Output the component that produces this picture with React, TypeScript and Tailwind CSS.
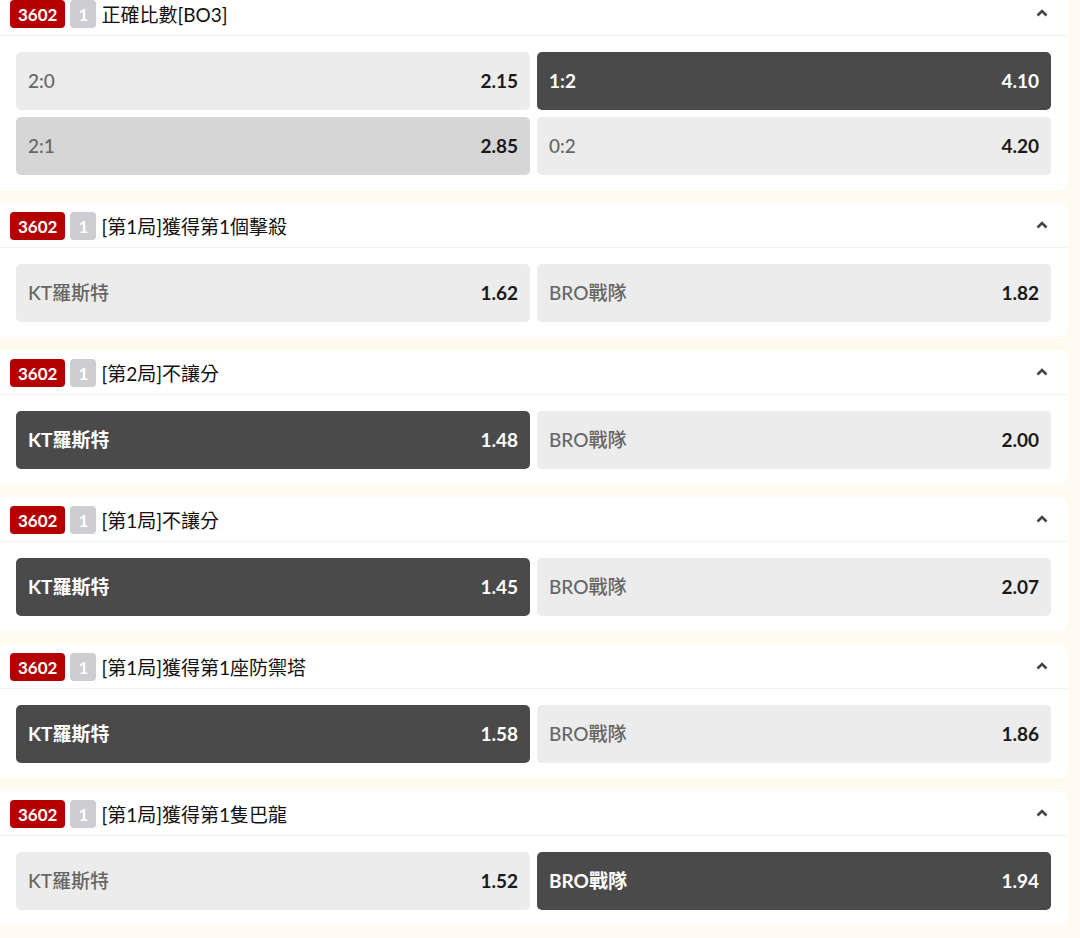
import React from "react";

type Opt = { label: string; odds: string; state?: "dark" | "hover" | "light" };
type Market = { title: string; rows: Opt[][] };

const markets: Market[] = [
  {
    title: "正確比數[BO3]",
    rows: [
      [
        { label: "2:0", odds: "2.15" },
        { label: "1:2", odds: "4.10", state: "dark" },
      ],
      [
        { label: "2:1", odds: "2.85", state: "hover" },
        { label: "0:2", odds: "4.20" },
      ],
    ],
  },
  {
    title: "[第1局]獲得第1個擊殺",
    rows: [[{ label: "KT羅斯特", odds: "1.62" }, { label: "BRO戰隊", odds: "1.82" }]],
  },
  {
    title: "[第2局]不讓分",
    rows: [[{ label: "KT羅斯特", odds: "1.48", state: "dark" }, { label: "BRO戰隊", odds: "2.00" }]],
  },
  {
    title: "[第1局]不讓分",
    rows: [[{ label: "KT羅斯特", odds: "1.45", state: "dark" }, { label: "BRO戰隊", odds: "2.07" }]],
  },
  {
    title: "[第1局]獲得第1座防禦塔",
    rows: [[{ label: "KT羅斯特", odds: "1.58", state: "dark" }, { label: "BRO戰隊", odds: "1.86" }]],
  },
  {
    title: "[第1局]獲得第1隻巴龍",
    rows: [[{ label: "KT羅斯特", odds: "1.52" }, { label: "BRO戰隊", odds: "1.94", state: "dark" }]],
  },
];

function Chevron() {
  return (
    <svg width="12" height="8" viewBox="0 0 12 8" className="block">
      <path d="M1.5 6.5 L6 2 L10.5 6.5" fill="none" stroke="#444" strokeWidth="2.6" strokeLinecap="butt" strokeLinejoin="miter" />
    </svg>
  );
}

function Button({ o }: { o: Opt }) {
  const dark = o.state === "dark";
  const bg = dark ? "bg-[#4a4a4a]" : o.state === "hover" ? "bg-[#d6d6d6]" : "bg-[#ececec]";
  return (
    <div className={`flex-1 h-[58px] rounded-[5px] ${bg} flex items-center justify-between pl-3 pr-3 text-[19px]`}>
      <span className={dark ? "text-white font-bold" : "text-[#666666] font-medium"}>{o.label}</span>
      <span className={`font-bold ${dark ? "text-white" : "text-[#1a1a1a]"}`}>{o.odds}</span>
    </div>
  );
}

function Card({ m, first }: { m: Market; first?: boolean }) {
  return (
    <div className={`bg-white w-[1067px] rounded-r-[6px] ${first ? "-mt-[9px]" : ""}`}>
      <div className="h-[45px] flex items-center pl-[10px] pr-[19px] pt-[2px] border-b border-[#f2f2f2]">
        <span className="h-[28px] px-[8px] rounded-[4px] bg-[#b50000] text-white font-bold text-[17px] flex items-center leading-none">
          3602
        </span>
        <span className="ml-[5px] h-[28px] w-[26px] rounded-[4px] bg-[#cdcdd2] text-white font-bold text-[17px] flex items-center justify-center leading-none">
          1
        </span>
        <span className="ml-[5px] text-[19px] text-[#111] leading-none">{m.title}</span>
        <span className="ml-auto -mt-[2px]">
          <Chevron />
        </span>
      </div>
      <div className="px-4 pt-4 pb-[15px] flex flex-col gap-[7px]">
        {m.rows.map((r, i) => (
          <div key={i} className="flex gap-[7px]">
            {r.map((o, j) => (
              <Button key={j} o={o} />
            ))}
          </div>
        ))}
      </div>
    </div>
  );
}

export default function App() {
  return (
    <div
      className="w-[1080px] h-[938px] overflow-hidden bg-[#fffbf0] flex flex-col gap-[13px]"
      style={{ fontFamily: 'Lato, "Noto Sans CJK TC", sans-serif' }}
    >
      {markets.map((m, i) => (
        <Card key={i} m={m} first={i === 0} />
      ))}
    </div>
  );
}
